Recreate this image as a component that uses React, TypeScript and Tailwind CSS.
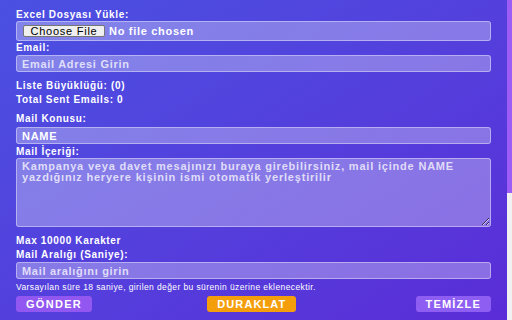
import React from 'react';

const label = 'block h-[12px] text-[10px] leading-[14px] font-bold tracking-[0.65px] text-white';
const field =
  'block w-full h-[17px] rounded-[3px] border border-white/40 bg-white/30 px-[5px] text-[11px] leading-[15px] font-bold tracking-[0.7px] text-white placeholder:text-white/75 outline-none';

export default function App() {
  return (
    <div
      className="flex h-[320px] w-full overflow-hidden bg-linear-to-br from-[#4a50e2] to-[#5a2cd7]"
      style={{ fontFamily: '"Liberation Sans", Arial, sans-serif' }}
    >
      <div className="flex-1 px-4 pt-[8px]">
        <span className={label}>Excel Dosyası Yükle:</span>
        <div className="mt-[1px] flex h-[20px] items-center rounded-[3px] border border-white/40 bg-white/30 pl-[6px]">
          <span className="flex h-[12px] w-[82px] items-center justify-center rounded-[2px] border border-[#767676] bg-[#efefef] text-[11px] leading-[11px] tracking-[0.75px] text-black">
            Choose File
          </span>
          <span className="ml-[4px] text-[11px] font-bold tracking-[0.7px] text-white">No file chosen</span>
        </div>

        <span className={label}>Email:</span>
        <input className={`${field} mt-[2px]`} placeholder="Email Adresi Girin" />

        <span className={`${label} mt-[7px]`}>Liste Büyüklüğü: (0)</span>
        <span className={`${label} mt-[2px]`}>Total Sent Emails: 0</span>

        <span className={`${label} mt-[7px]`}>Mail Konusu:</span>
        <input className={`${field} mt-[3px]`} defaultValue="NAME" />

        <span className={`${label} mt-[1px]`}>Mail İçeriği:</span>
        <textarea
          className="mt-[1px] block h-[69px] w-full rounded-[3px] border border-white/40 bg-white/30 px-[5px] pt-[2px] text-[11px] leading-[11px] font-bold tracking-[0.8px] text-white placeholder:text-white/75 outline-none"
          placeholder="Kampanya veya davet mesajınızı buraya girebilirsiniz, mail içinde NAME yazdığınız heryere kişinin ismi otomatik yerleştirilir"
        />

        <span className={`${label} mt-[7px]`}>Max 10000 Karakter</span>
        <span className={`${label} mt-[2px]`}>Mail Aralığı (Saniye):</span>
        <input className={`${field} mt-[2px]`} placeholder="Mail aralığını girin" />

        <p className="mt-[3px] h-[10px] text-[8.5px] leading-[10px] tracking-[0.4px] text-white">
          Varsayılan süre 18 saniye, girilen değer bu sürenin üzerine eklenecektir.
        </p>

        <div className="mt-[4px] flex justify-between">
          <button className="h-[16px] rounded-[3px] bg-[#9257f1] px-[10px] text-[11px] font-bold tracking-[1.3px] text-white">
            GÖNDER
          </button>
          <button className="-ml-[4px] h-[16px] rounded-[3px] bg-[#f59e0b] px-[10px] text-[11px] font-bold tracking-[1.1px] text-white">
            DURAKLAT
          </button>
          <button className="h-[16px] rounded-[3px] bg-[#8e5ef2] px-[10px] text-[11px] font-bold tracking-[1.2px] text-white">
            TEMİZLE
          </button>
        </div>
      </div>

      <div className="flex w-[5px] flex-col">
        <div className="h-[193px] bg-[#9d5cf6]" />
        <div className="flex-1 bg-[#f1f1f1]" />
      </div>
    </div>
  );
}
